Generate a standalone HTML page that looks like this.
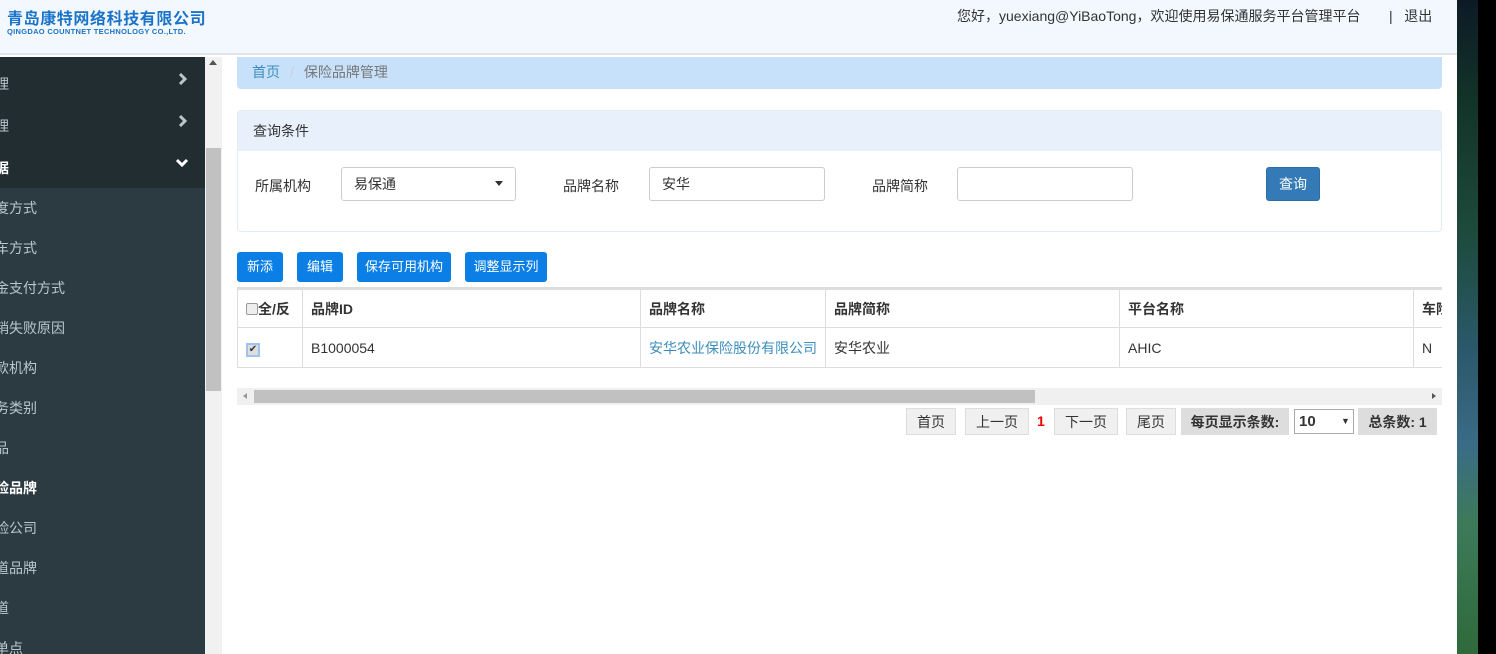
<!DOCTYPE html>
<html><head><meta charset="utf-8"><style>
*{box-sizing:border-box;margin:0;padding:0}
body{width:1496px;height:654px;overflow:hidden;position:relative;background:#fff;font-family:"Liberation Sans","Noto Sans CJK SC",sans-serif;font-size:14px;color:#333}
.a{position:absolute}
.side .it{position:absolute;left:-5px;width:210px;height:40px;line-height:40px;color:#b8c7ce;font-size:14px}
.side svg{position:absolute}
.btn{position:absolute;top:252px;height:30px;line-height:30px;background:#0b7fe6;color:#fff;border-radius:3px;font-size:13px;text-align:center}
.pg{position:absolute;top:408px;height:27px;line-height:27px;border:1px solid #ddd;background:#f0f0f0;font-size:14px;text-align:center;color:#333}
td,th{border:1px solid #ddd;padding:0 8px;text-align:left;white-space:nowrap}
</style></head><body>
<div class="a" style="left:0;top:0;width:1457px;height:55px;background:#f3f8fe;border-bottom:2px solid #e2e6ea"></div>
<div class="a" style="left:7px;top:5px;font-size:16px;font-weight:bold;color:#1a73c8;letter-spacing:0.6px">青岛康特网络科技有限公司</div>
<div class="a" style="left:7px;top:27px;font-size:7.5px;font-weight:bold;color:#1a73c8;letter-spacing:0.3px">QINGDAO COUNTNET TECHNOLOGY CO.,LTD.</div>
<div class="a" style="left:957px;top:6px;font-size:14px;color:#333">您好，yuexiang@YiBaoTong，欢迎使用易保通服务平台管理平台</div>
<div class="a" style="left:1389px;top:6px;font-size:14px;color:#333">|&nbsp;&nbsp;&nbsp;退出</div>
<div class="a" style="left:1457px;top:0;width:21px;height:654px;background:linear-gradient(#0d1a26 0%,#123328 15%,#1d4a3a 35%,#2c5a6e 55%,#3a6c86 68%,#3d7a5a 80%,#2e6a3a 100%)"></div>
<div class="a" style="left:1478px;top:0;width:18px;height:654px;background:#000"></div>
<div class="a side" style="left:0;top:57px;width:205px;height:597px;background:#2c3b41;overflow:hidden">
<div class="a" style="left:0;top:0;width:205px;height:131px;background:#222d32"></div>
<div class="it" style="top:7px">理</div>
<svg style="left:178px;top:15px" width="10" height="14" viewBox="0 0 10 14"><path d="M2 2 L7 7 L2 12" stroke="#b8c7ce" stroke-width="3" fill="none"/></svg>
<div class="it" style="top:49px">理</div>
<svg style="left:178px;top:57px" width="10" height="14" viewBox="0 0 10 14"><path d="M2 2 L7 7 L2 12" stroke="#b8c7ce" stroke-width="3" fill="none"/></svg>
<div class="it" style="top:91px;color:#fff;font-weight:bold">据</div>
<svg style="left:175px;top:101px" width="14" height="10" viewBox="0 0 14 10"><path d="M2 2 L7 7 L12 2" stroke="#fff" stroke-width="3" fill="none"/></svg>
<div class="it" style="top:131px">度方式</div>
<div class="it" style="top:171px">车方式</div>
<div class="it" style="top:211px">金支付方式</div>
<div class="it" style="top:251px">销失败原因</div>
<div class="it" style="top:291px">款机构</div>
<div class="it" style="top:331px">务类别</div>
<div class="it" style="top:371px">品</div>
<div class="it" style="top:411px;color:#fff;font-weight:bold">险品牌</div>
<div class="it" style="top:451px">险公司</div>
<div class="it" style="top:491px">道品牌</div>
<div class="it" style="top:531px">道</div>
<div class="it" style="top:571px">单点</div>
</div>
<div class="a" style="left:205px;top:57px;width:17px;height:597px;background:#f1f1f1"></div>
<div class="a" style="left:206px;top:148px;width:15px;height:243px;background:#c1c1c1"></div>
<div class="a" style="left:209px;top:60px;width:0;height:0;border-left:4px solid transparent;border-right:4px solid transparent;border-bottom:5px solid #555"></div>
<div class="a" style="left:237px;top:57px;width:1205px;height:32px;background:#c8e1fb;border-radius:0 0 4px 4px;line-height:30px;padding-left:15px;color:#777"><span style="color:#3c8dbc">首页</span><span style="color:#ccc;margin:0 10px">/</span>保险品牌管理</div>
<div class="a" style="left:237px;top:110px;width:1205px;height:122px;border:1px solid #e4ecf4;border-radius:4px;background:#fff"></div>
<div class="a" style="left:238px;top:111px;width:1203px;height:40px;background:#e8f1fb;line-height:40px;padding-left:15px">查询条件</div>
<div class="a" style="left:255px;top:176px">所属机构</div>
<div class="a" style="left:341px;top:167px;width:175px;height:34px;border:1px solid #ccc;border-radius:3px;line-height:32px;padding-left:12px">易保通<span style="position:absolute;left:153px;top:13px;border-left:4px solid transparent;border-right:4px solid transparent;border-top:5px solid #333"></span></div>
<div class="a" style="left:563px;top:176px">品牌名称</div>
<div class="a" style="left:649px;top:167px;width:176px;height:34px;border:1px solid #ccc;border-radius:3px;line-height:32px;padding-left:12px">安华</div>
<div class="a" style="left:872px;top:176px">品牌简称</div>
<div class="a" style="left:957px;top:167px;width:176px;height:34px;border:1px solid #ccc;border-radius:3px"></div>
<div class="a" style="left:1266px;top:167px;width:54px;height:34px;background:#337ab7;border:1px solid #2e6da4;border-radius:3px;color:#fff;line-height:32px;text-align:center">查询</div>
<div class="btn" style="left:237px;width:46px">新添</div>
<div class="btn" style="left:297px;width:46px">编辑</div>
<div class="btn" style="left:357px;width:94px">保存可用机构</div>
<div class="btn" style="left:465px;width:82px">调整显示列</div>
<div class="a" style="left:237px;top:287px;width:1205px;height:82px;overflow:hidden">
<table style="border-collapse:collapse;width:1260px;border-top:3px solid #ddd;font-size:14px">
<tr style="height:39px;font-weight:bold"><th style="width:65px;padding:0 4px 0 8px"><span style="display:inline-block;width:12px;height:12px;border:1px solid #999;background:#eee;border-radius:2px;vertical-align:-1px"></span>全/反</th><th style="width:338px">品牌ID</th><th style="width:185px">品牌名称</th><th style="width:294px">品牌简称</th><th style="width:294px">平台名称</th><th>车险</th></tr>
<tr style="height:40px"><td style="padding-left:8px"><span style="display:inline-block;width:14px;height:14px;border:2px solid #9ec3f0;background:#ddd;font-size:10px;line-height:10px;text-align:center">✔</span></td><td>B1000054</td><td style="color:#3c8dbc">安华农业保险股份有限公司</td><td>安华农业</td><td>AHIC</td><td>N</td></tr>
</table></div>
<div class="a" style="left:237px;top:388px;width:1205px;height:17px;background:#f0f0f0"></div>
<div class="a" style="left:254px;top:390px;width:781px;height:13px;background:#c1c1c1"></div>
<div class="a" style="left:243px;top:393px;border-top:3px solid transparent;border-bottom:3px solid transparent;border-right:4px solid #999"></div>
<div class="a" style="left:1432px;top:393px;border-top:3px solid transparent;border-bottom:3px solid transparent;border-left:4px solid #555"></div>
<div class="pg" style="left:906px;width:50px">首页</div>
<div class="pg" style="left:965px;width:64px">上一页</div>
<div class="a" style="left:1037px;top:413px;color:#e00;font-weight:bold">1</div>
<div class="pg" style="left:1054px;width:64px">下一页</div>
<div class="pg" style="left:1126px;width:50px">尾页</div>
<div class="pg" style="left:1181px;width:108px;background:#ddd;border-color:#ddd;font-weight:bold">每页显示条数:</div>
<div class="a" style="left:1294px;top:409px;width:60px;height:25px;border:1px solid #aaa;background:#fff;font-weight:bold;line-height:23px;padding-left:4px;font-size:15px">10<span style="position:absolute;left:46px;font-size:9px;font-weight:normal">▼</span></div>
<div class="pg" style="left:1358px;width:79px;background:#ddd;border-color:#ddd;font-weight:bold">总条数: 1</div>
</body></html>
